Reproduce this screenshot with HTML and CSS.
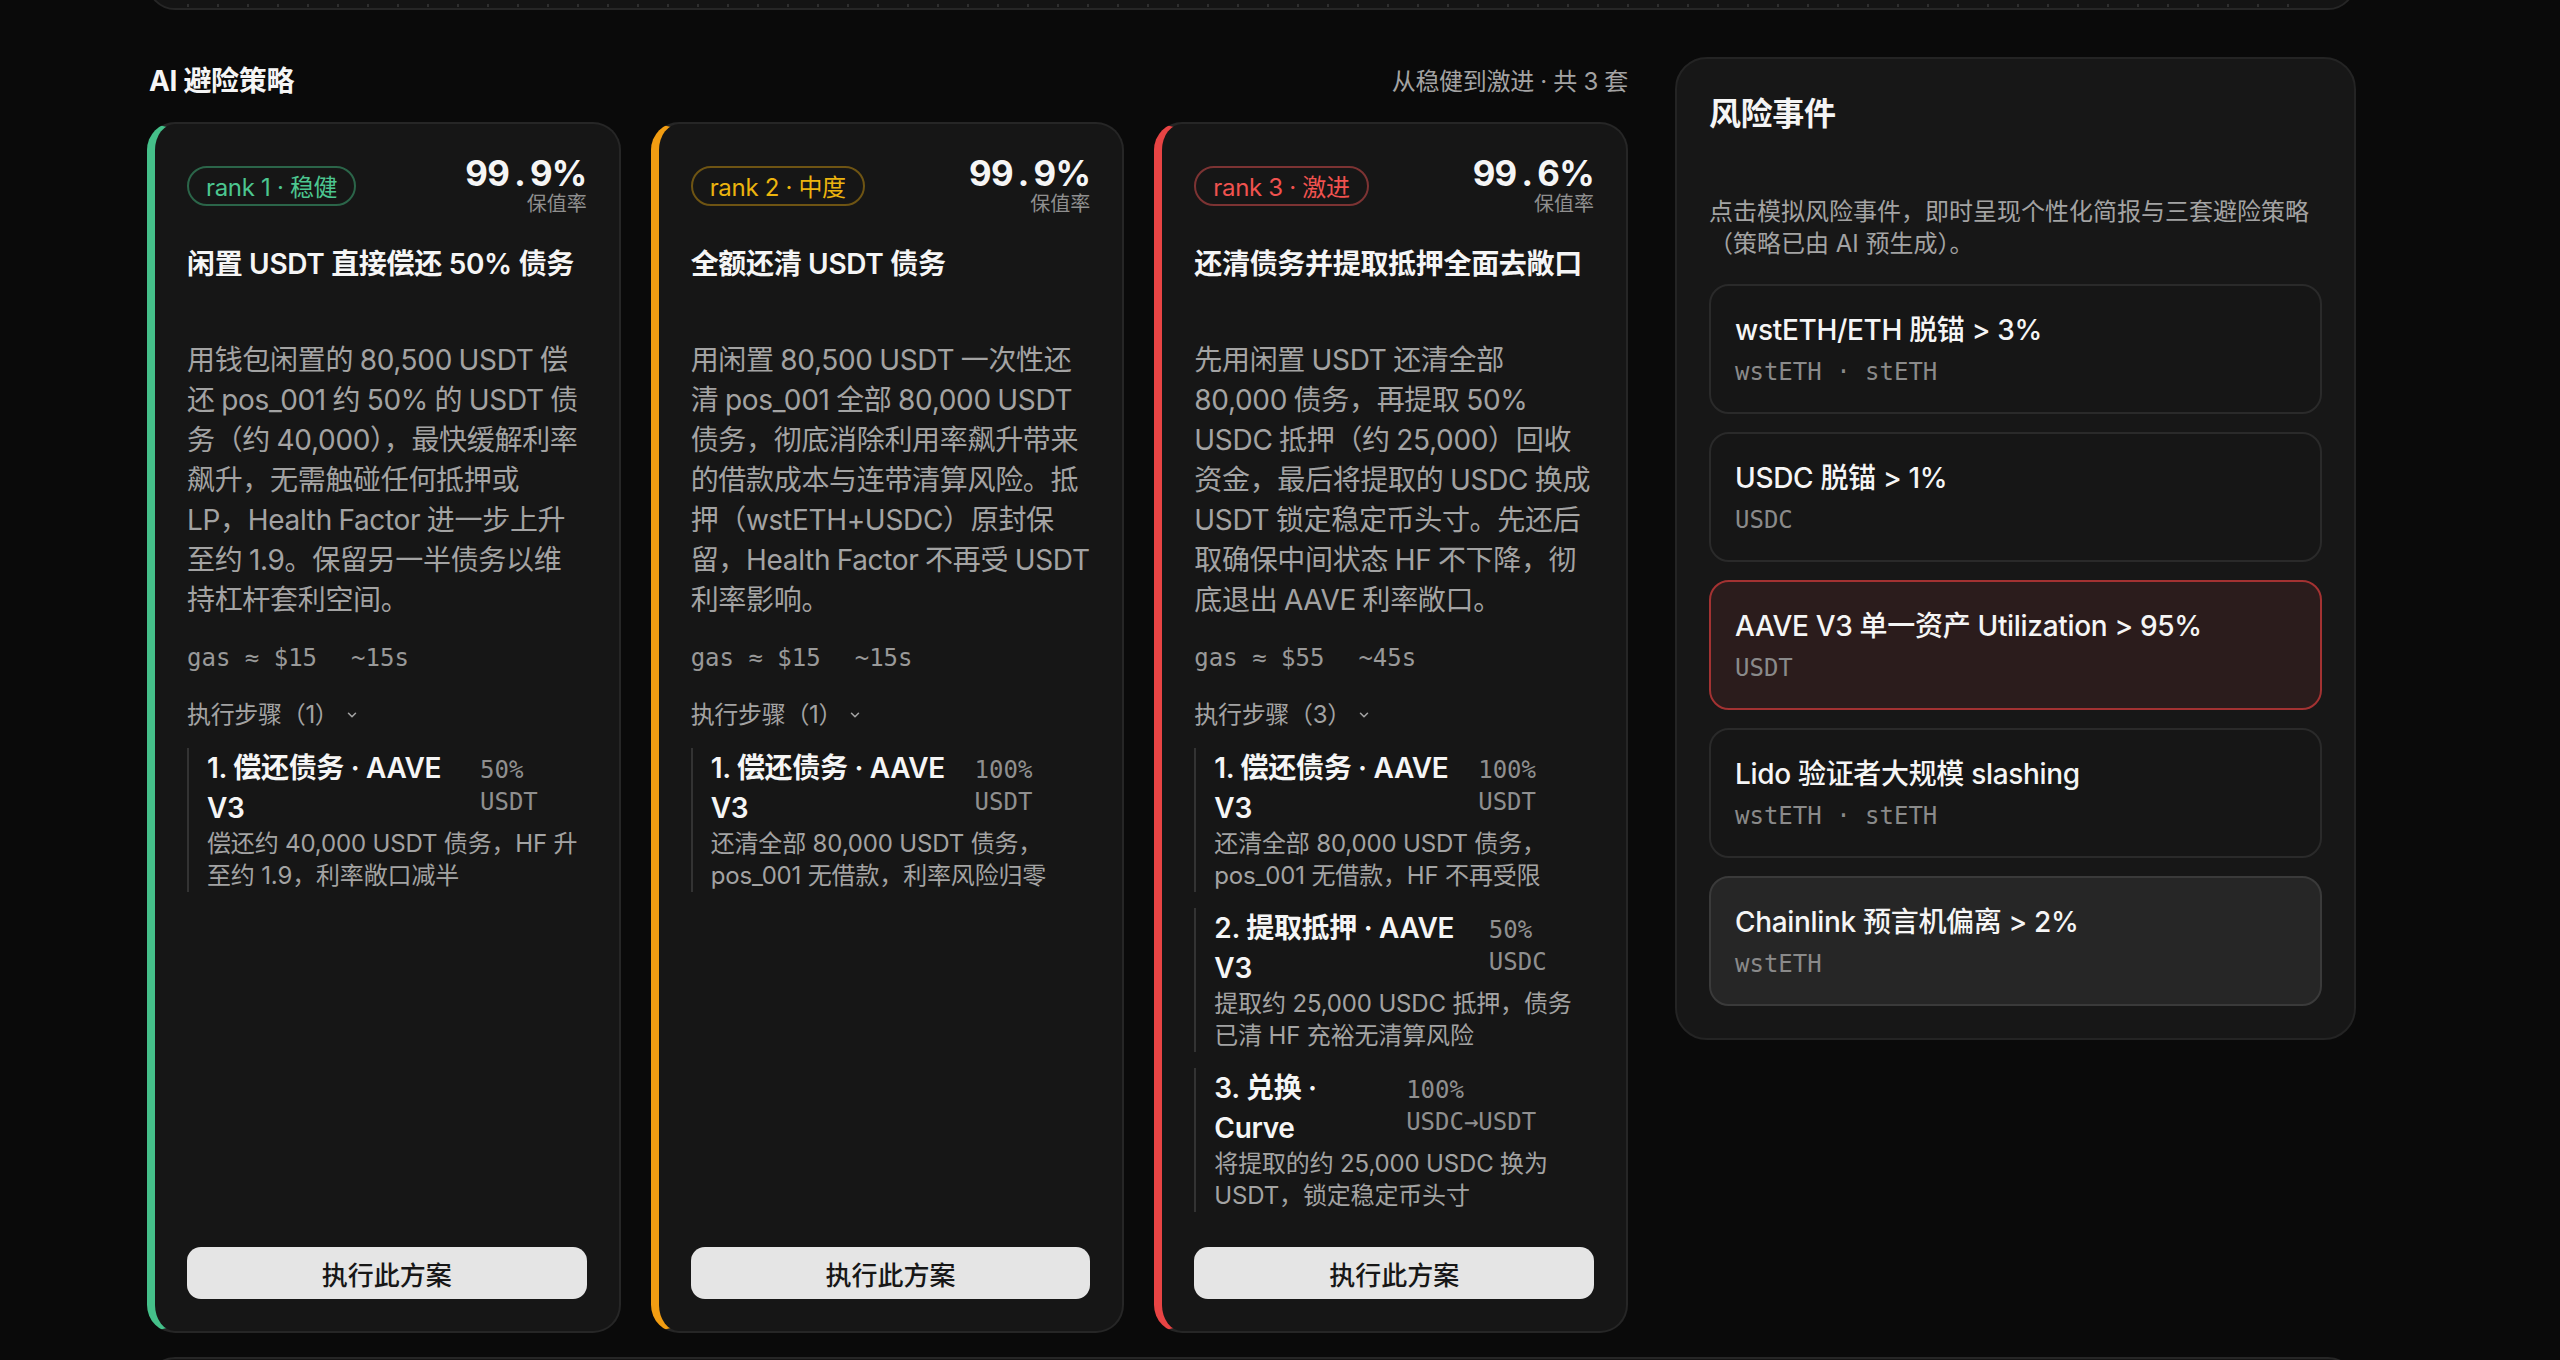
FILE: index.html
```html
<!DOCTYPE html>
<html lang="zh-CN">
<head>
<meta charset="utf-8">
<title>AI 避险策略</title>
<link rel="stylesheet" href="styles.css">
</head>
<body>
<div class="page">
  <div class="top-card"><div class="ticks"></div></div>

  <div class="layout">
    <section class="strategies">
      <div class="section-head">
        <h2 class="section-title">AI 避险策略</h2>
        <span class="section-meta">从稳健到激进 · 共 3 套</span>
      </div>

      <div class="cards">
        <article class="card rank-1">
          <div class="card-head">
            <span class="badge">rank 1 · 稳健</span>
            <div class="rate">
              <div class="rate-value">99<span class="dot">.</span>9%</div>
              <div class="rate-label">保值率</div>
            </div>
          </div>
          <h3 class="card-title">闲置 USDT 直接偿还 50% 债务</h3>
          <p class="card-desc">用钱包闲置的 80,500 USDT 偿还 pos_001 约 50% 的 USDT 债务（约 40,000），最快缓解利率飙升，无需触碰任何抵押或 LP，&#8288;Health Factor 进一步上升至约 1.9。保留另一半债务以维持杠杆套利空间。</p>
          <div class="gas"><span>gas ≈ $15</span><span>~15s</span></div>
          <div class="steps-toggle">执行步骤（1）<svg class="chev" viewBox="0 0 12 12" width="14" height="14"><polyline points="3,4.5 6,7.5 9,4.5" fill="none" stroke="#a3a3a3" stroke-width="1.3" stroke-linecap="round" stroke-linejoin="round"/></svg></div>
          <ol class="steps">
            <li class="step">
              <div class="step-head"><span class="step-title">1. 偿还债务 · AAVE V3</span><span class="step-amt">50% USDT</span></div>
              <p class="step-desc">偿还约 40,000 USDT 债务，HF 升至约 1.9，利率敞口减半</p>
            </li>
          </ol>
          <button class="btn">执行此方案</button>
        </article>

        <article class="card rank-2">
          <div class="card-head">
            <span class="badge">rank 2 · 中度</span>
            <div class="rate">
              <div class="rate-value">99<span class="dot">.</span>9%</div>
              <div class="rate-label">保值率</div>
            </div>
          </div>
          <h3 class="card-title">全额还清 USDT 债务</h3>
          <p class="card-desc">用闲置 80,500 USDT 一次性还清 pos_001 全部 80,000 USDT 债务，彻底消除利用率飙升带来的借款成本与连带清算风险。抵押（wstETH+USDC）原封保留，Health Factor 不再受 USDT 利率影响。</p>
          <div class="gas"><span>gas ≈ $15</span><span>~15s</span></div>
          <div class="steps-toggle">执行步骤（1）<svg class="chev" viewBox="0 0 12 12" width="14" height="14"><polyline points="3,4.5 6,7.5 9,4.5" fill="none" stroke="#a3a3a3" stroke-width="1.3" stroke-linecap="round" stroke-linejoin="round"/></svg></div>
          <ol class="steps">
            <li class="step">
              <div class="step-head"><span class="step-title">1. 偿还债务 · AAVE V3</span><span class="step-amt">100% USDT</span></div>
              <p class="step-desc">还清全部 80,000 USDT 债务，pos_001 无借款，利率风险归零</p>
            </li>
          </ol>
          <button class="btn">执行此方案</button>
        </article>

        <article class="card rank-3">
          <div class="card-head">
            <span class="badge">rank 3 · 激进</span>
            <div class="rate">
              <div class="rate-value">99<span class="dot">.</span>6%</div>
              <div class="rate-label">保值率</div>
            </div>
          </div>
          <h3 class="card-title">还清债务并提取抵押全面去敞口</h3>
          <p class="card-desc">先用闲置 USDT 还清全部 80,000 债务，再提取 50% USDC 抵押（约 25,000）回收资金，最后将提取的 USDC 换成 USDT 锁定稳定币头寸。先还后取确保中间状态 HF 不下降，彻底退出 AAVE 利率敞口。</p>
          <div class="gas"><span>gas ≈ $55</span><span>~45s</span></div>
          <div class="steps-toggle">执行步骤（3）<svg class="chev" viewBox="0 0 12 12" width="14" height="14"><polyline points="3,4.5 6,7.5 9,4.5" fill="none" stroke="#a3a3a3" stroke-width="1.3" stroke-linecap="round" stroke-linejoin="round"/></svg></div>
          <ol class="steps">
            <li class="step">
              <div class="step-head"><span class="step-title">1. 偿还债务 · AAVE V3</span><span class="step-amt">100% USDT</span></div>
              <p class="step-desc">还清全部 80,000 USDT 债务，pos_001 无借款，HF 不再受限</p>
            </li>
            <li class="step">
              <div class="step-head"><span class="step-title">2. 提取抵押 · AAVE V3</span><span class="step-amt">50% USDC</span></div>
              <p class="step-desc">提取约 25,000 USDC 抵押，债务已清 HF 充裕无清算风险</p>
            </li>
            <li class="step">
              <div class="step-head"><span class="step-title">3. 兑换 · Curve</span><span class="step-amt">100% USDC→USDT</span></div>
              <p class="step-desc">将提取的约 25,000 USDC 换为 USDT，锁定稳定币头寸</p>
            </li>
          </ol>
          <button class="btn">执行此方案</button>
        </article>
      </div>
    </section>

    <aside class="events">
      <h2 class="events-title">风险事件</h2>
      <p class="events-desc">点击模拟风险事件，即时呈现个性化简报与三套避险策略（策略已由 AI 预生成）。</p>
      <div class="event-list">
        <div class="event">
          <div class="event-title">wstETH/ETH 脱锚 &gt; 3%</div>
          <div class="event-assets">wstETH · stETH</div>
        </div>
        <div class="event">
          <div class="event-title">USDC 脱锚 &gt; 1%</div>
          <div class="event-assets">USDC</div>
        </div>
        <div class="event is-active">
          <div class="event-title">AAVE V3 单一资产 Utilization &gt; 95%</div>
          <div class="event-assets">USDT</div>
        </div>
        <div class="event">
          <div class="event-title">Lido 验证者大规模 slashing</div>
          <div class="event-assets">wstETH · stETH</div>
        </div>
        <div class="event is-hover">
          <div class="event-title">Chainlink 预言机偏离 &gt; 2%</div>
          <div class="event-assets">wstETH</div>
        </div>
      </div>
    </aside>
  </div>

  <div class="bottom-card"></div>
</div>
</body>
</html>
```

FILE: styles.css
```css
html, body {
  margin: 0;
  padding: 0;
  background: #0a0a0a;
  height: 1360px;
  overflow: hidden;
}

body {
  font-family: Inter, "Noto Sans CJK SC", sans-serif;
  color: #f5f5f5;
  letter-spacing: -0.32px;
}

.page {
  width: 2209px;
  margin-left: 147px;
}

.top-card {
  margin-top: -300px;
  height: 306px;
  border: 2px solid #262626;
  border-radius: 28px;
  background: #141414;
  display: flex;
  flex-direction: column;
  justify-content: flex-end;
}

.ticks {
  height: 3px;
  margin: 0 38px 1px 38px;
  background: repeating-linear-gradient(90deg, #2e2e2e 0 2px, transparent 2px 30px);
}

.layout {
  display: grid;
  grid-template-columns: 1481px 681px;
  column-gap: 47px;
  margin-top: 47px;
  align-items: start;
}

.section-head {
  display: flex;
  justify-content: space-between;
  align-items: center;
  height: 44px;
  margin-bottom: 21px;
}

.section-title {
  margin: 0;
  padding-left: 2px;
  font-size: 28px;
  font-weight: 700;
}

.section-meta {
  font-size: 24px;
  color: #a3a3a3;
}

.cards {
  display: grid;
  grid-template-columns: repeat(3, 1fr);
  gap: 30px;
}

.card {
  display: flex;
  flex-direction: column;
  background: #161616;
  border: 2px solid #262626;
  border-left: 8px solid var(--accent);
  border-radius: 28px;
  padding: 31px 32px 32px 32px;
}

.rank-1 { --accent: #45c08a; --badge: #4cc690; --badge-border: #2b6549; }
.rank-2 { --accent: #f29d12; --badge: #ecb40e; --badge-border: #6e5413; }
.rank-3 { --accent: #e84444; --badge: #f0524f; --badge-border: #7c3333; }

.card-head {
  display: flex;
  justify-content: space-between;
  align-items: center;
}

.badge {
  display: inline-flex;
  align-items: center;
  height: 40px;
  box-sizing: border-box;
  padding: 0 17px;
  border: 2px solid var(--badge-border);
  border-radius: 999px;
  color: var(--badge);
  font-size: 24px;
}

.rate {
  text-align: right;
}

.rate-value {
  font-size: 35px;
  line-height: 36px;
  font-weight: 700;
  font-variant-numeric: tabular-nums;
  letter-spacing: -0.7px;
}

.dot {
  margin: 0 6px;
}

.rate-label {
  margin-top: 1px;
  font-size: 20px;
  line-height: 24px;
  color: #8f8f8f;
  letter-spacing: 0;
}

.card-title {
  margin: 28px 0 0;
  font-size: 28px;
  line-height: 40px;
  font-weight: 600;
}

.card-desc {
  margin: 56px 0 0;
  font-size: 28px;
  line-height: 40px;
  color: #a3a3a3;
  word-spacing: -1px;
}

.gas {
  display: flex;
  gap: 34px;
  margin-top: 22px;
  font-family: "DejaVu Sans Mono", monospace;
  font-size: 24px;
  line-height: 32px;
  color: #999999;
  letter-spacing: 0;
}

.steps-toggle {
  display: flex;
  align-items: center;
  margin-top: 25px;
  font-size: 24px;
  line-height: 32px;
  color: #a3a3a3;
}

.chev {
  margin-left: 6px;
}

.steps {
  list-style: none;
  margin: 17px 0 35px;
  padding: 0;
  display: flex;
  flex-direction: column;
  gap: 16px;
}

.step {
  border-left: 2px solid #333333;
  padding-left: 18px;
}

.step-head {
  display: flex;
  justify-content: space-between;
  align-items: baseline;
  gap: 16px;
}

.step-title {
  font-size: 28px;
  line-height: 40px;
  font-weight: 600;
}

.step-amt {
  font-family: "DejaVu Sans Mono", monospace;
  font-size: 24px;
  line-height: 32px;
  color: #8f8f8f;
  letter-spacing: 0;
}

.step-desc {
  margin: 0;
  font-size: 24px;
  line-height: 32px;
  color: #a3a3a3;
  letter-spacing: -0.16px;
}

.btn {
  margin-top: auto;
  width: 100%;
  height: 52px;
  border: 0;
  border-radius: 14px;
  background: #e5e5e5;
  color: #171717;
  font-family: Inter, "Noto Sans CJK SC", sans-serif;
  font-size: 26px;
  font-weight: 500;
  letter-spacing: 0;
}

.events {
  background: #171717;
  border: 2px solid #242424;
  border-radius: 32px;
  padding: 32px;
}

.events-title {
  margin: 0;
  font-size: 32px;
  line-height: 46px;
  font-weight: 600;
}

.events-desc {
  margin: 59px 0 0;
  font-size: 24px;
  line-height: 32px;
  color: #a3a3a3;
  letter-spacing: 0;
}

.event-list {
  display: flex;
  flex-direction: column;
  gap: 18px;
  margin-top: 24px;
}

.event {
  border: 2px solid #2a2a2a;
  border-radius: 20px;
  padding: 24px;
  background: #161616;
}

.event.is-active {
  background: #2b1c1c;
  border-color: #a33232;
}

.event.is-hover {
  background: #262626;
  border-color: #3a3a3a;
}

.event-title {
  font-size: 28px;
  line-height: 40px;
  font-weight: 500;
}

.event-assets {
  margin-top: 6px;
  font-family: "DejaVu Sans Mono", monospace;
  font-size: 24px;
  line-height: 32px;
  color: #8a8a8a;
  letter-spacing: 0;
}

.bottom-card {
  margin-top: 24px;
  height: 200px;
  border: 2px solid #262626;
  border-radius: 28px;
  background: #141414;
}
```
